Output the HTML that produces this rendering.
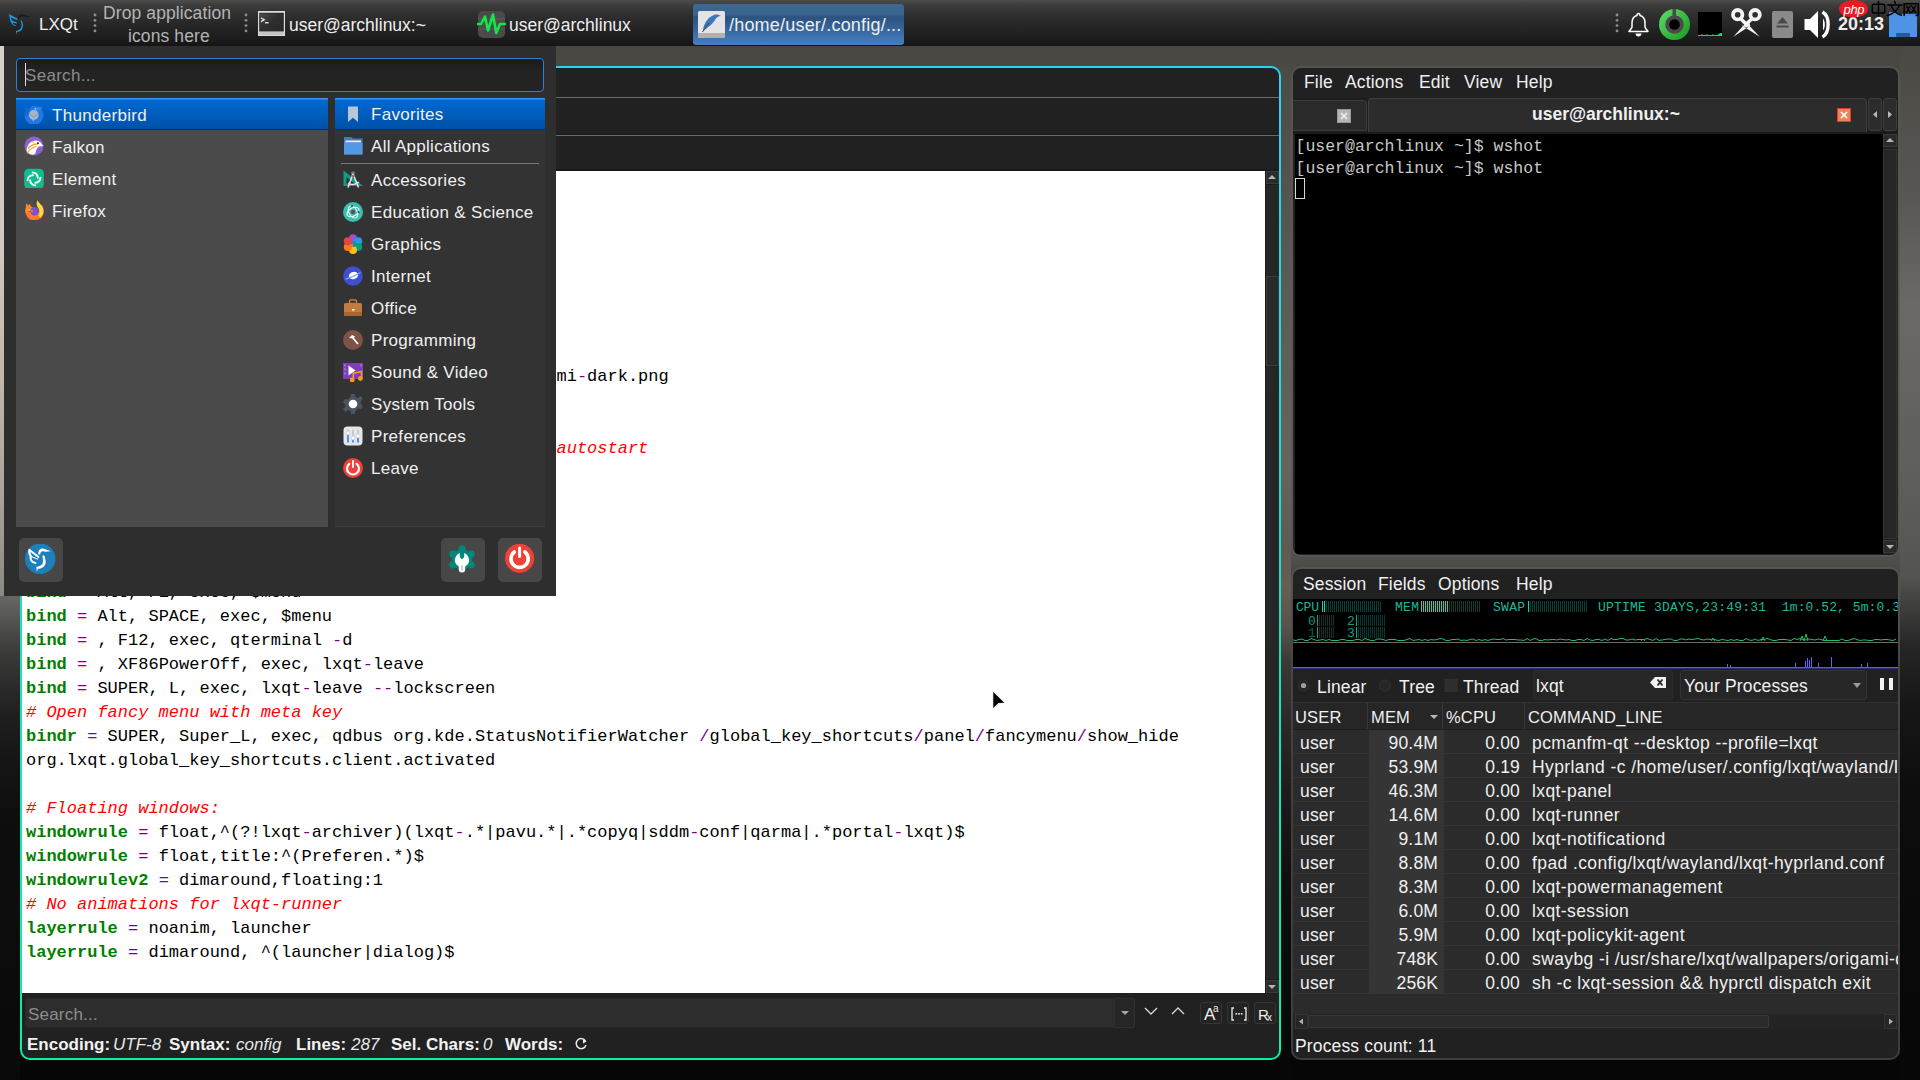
<!DOCTYPE html>
<html><head><meta charset="utf-8">
<style>
*{box-sizing:border-box;margin:0;padding:0}
html,body{width:1920px;height:1080px;overflow:hidden;background:#0a0a0a}
body{position:relative;font-family:"Liberation Sans",sans-serif;color:#eee}
.abs{position:absolute}
#wall{position:absolute;left:0;top:0;width:1920px;height:1080px;
 background:
  linear-gradient(180deg,#d6d3cc 0px,#cfcac0 200px,#c4bcae 300px,#a8a39b 450px,#8a8884 550px) 0 46px/4px 550px no-repeat,
  linear-gradient(180deg,#484741 46px,#4e4d48 150px,#62615d 300px,#5c5c59 480px,#4f4e4b 560px,#3a3937 610px,#222221 660px,#131313 730px,#0a0a0a 820px,#060606 1080px);}
#panel{left:0;top:0;width:1920px;height:46px;background:linear-gradient(180deg,#4c4c4b 0px,#3b3b3a 6px,#303030 14px,#262626 26px,#1d1d1d 38px,#141414 46px)}
.ptxt{position:absolute;font-size:17px;color:#eee;white-space:nowrap}
.win{position:absolute;border-radius:10px;overflow:hidden}
.code{position:absolute;left:4px;top:1.5px;font-family:"Liberation Mono",monospace;font-size:17px;line-height:24px;color:#000;white-space:pre}
.k{color:#008000;font-weight:bold}.o{color:#800080}.c{color:#ff0000;font-style:italic}
.c .o{color:#ff0000}
.tbtn{width:22px;height:22px;border:1px solid #353535;border-radius:3px;background:#232323}
.stat{font-size:17px;color:#f2f2f2;white-space:nowrap}
.stat i{font-style:italic;color:#e8e8e8}
.mt{font-size:17px;color:#f0f0f0;white-space:nowrap;letter-spacing:0.3px;margin-top:2px}
.hl{background:linear-gradient(180deg,#3d92f2 0px,#3d92f2 1px,#0068d0 2px,#005ebe 50%,#0050a6 100%);border-bottom:1px solid #00306c}
.mbtn{width:44px;height:44px;background:#474747;border-radius:5px}
.hdl{position:absolute;top:13px;width:4px;height:21px}
.ut{font-size:17.5px;color:#f0f0f0;white-space:nowrap;letter-spacing:0.15px}
.tt{font-family:"Liberation Mono",monospace;font-size:16.5px;line-height:22px;color:#c8c8c8;white-space:pre}
.qr{left:0;width:605px;height:24px;background:#2b2b2b;border-bottom:1px solid #353535}
.qc{top:2px;font-size:17.5px;color:#f0f0f0;white-space:nowrap;line-height:23px;height:23px;letter-spacing:0.15px}
.lcd{font-family:"Liberation Mono",monospace;font-size:12.5px;color:#1cc4a8;white-space:pre;letter-spacing:0.5px;line-height:12px;transform:scaleY(0.95)}
</style></head>
<body>
<div id="wall"></div>
<div class="abs" style="left:0;top:596px;width:20px;height:484px;background:linear-gradient(180deg,#666664 0px,#5a5a58 18px,#464645 40px,#383837 60px,#2b2b2b 90px,#1f1f1f 120px,#161616 160px,#0e0e0e 220px,#090909 484px)"></div>
<div class="abs" style="left:1281px;top:66px;width:10px;height:1014px;background:linear-gradient(180deg,#4b4a45 0px,#5a5955 200px,#66645f 400px,#5e5a54 480px,#675e54 520px,#5a534b 560px,#3a3633 600px,#2a2928 660px,#1a1a1a 740px,#0e0e0e 820px,#070707 1014px)"></div>
<div class="abs" style="left:1900px;top:46px;width:20px;height:1034px;background:linear-gradient(180deg,#4a4944 0px,#585753 150px,#6a6966 260px,#5d5d5a 450px,#545451 530px,#3e3e3c 560px,#262626 600px,#161616 660px,#0c0c0c 760px,#070707 1034px)"></div>
<div id="panel" class="abs">
 <svg class="abs" style="left:7px;top:10px" width="26" height="26" viewBox="0 0 26 26">
  <path d="M2 4 L11 9 L10 10 L4 7.5 C4 9 5 10.5 6 11 L10 12.5 L9.5 13.5 L5.5 12.5 C6 14 7 15 9 15.5 L8.5 16 C5 15.5 3 12 2 4Z" fill="#1b9ae4"/>
  <path d="M14 10 C16 12 16.5 15 15.5 18 C14.5 21 12 22 10 22 L9.5 25 L9 21 C12 20.5 14 19 14.5 16.5 C15 14 14 11.5 13.5 10.5Z" fill="#1b9ae4"/>
  <path d="M11 9 C11 5.5 13 4.5 15 4.5 C17 4.5 18 5 19 5.5 L25 6.5 L19 6.8 C17.5 6.2 15.5 6 14 6.5 C12.5 7 12 8 11.8 9.5Z" fill="#1a1a1a"/>
 </svg>
 <div class="ptxt" style="left:39px;top:15px;font-size:17px">LXQt</div>
 <div class="hdl" style="left:93px"><svg width="4" height="21"><circle cx="2" cy="2" r="1.4" fill="#8d8d8d"/><circle cx="2" cy="7.3" r="1.4" fill="#8d8d8d"/><circle cx="2" cy="12.6" r="1.4" fill="#8d8d8d"/><circle cx="2" cy="17.9" r="1.4" fill="#8d8d8d"/></svg></div>
 <div class="ptxt" style="left:103px;top:3px;color:#b4b4b4;font-size:17.5px;letter-spacing:0.1px">Drop application</div>
 <div class="ptxt" style="left:128px;top:26px;color:#b4b4b4;font-size:17.5px;letter-spacing:0.1px">icons here</div>
 <div class="hdl" style="left:244px"><svg width="4" height="21"><circle cx="2" cy="2" r="1.4" fill="#8d8d8d"/><circle cx="2" cy="7.3" r="1.4" fill="#8d8d8d"/><circle cx="2" cy="12.6" r="1.4" fill="#8d8d8d"/><circle cx="2" cy="17.9" r="1.4" fill="#8d8d8d"/></svg></div>
 <svg class="abs" style="left:257px;top:10px" width="29" height="27" viewBox="0 0 29 27">
  <defs><linearGradient id="tg" x1="0" y1="0" x2="1" y2="1"><stop offset="0" stop-color="#4c4c4c"/><stop offset="0.5" stop-color="#2e2e2e"/><stop offset="1" stop-color="#262626"/></linearGradient></defs>
  <rect x="1" y="1" width="27" height="25" fill="#dcdcdc"/><rect x="2.3" y="2.8" width="24.4" height="18.7" fill="#151515"/><rect x="2.8" y="3.3" width="23.4" height="17.7" fill="url(#tg)"/><rect x="2.3" y="21.8" width="24.4" height="3.3" fill="#c4c4c4"/>
  <path d="M4 8 L7.3 9.8 L4 11.6" stroke="#eee" stroke-width="1.2" fill="none"/><rect x="8" y="12" width="3.6" height="1.5" fill="#d8d8d8"/>
 </svg>
 <div class="ptxt" style="left:289px;top:15px;font-size:17.5px">user@archlinux:~</div>
 <svg class="abs" style="left:477px;top:10px" width="29" height="29" viewBox="0 0 29 29">
  <rect x="1" y="1" width="27" height="27" rx="5" fill="#4a4a4a"/><path d="M1 9 H28 M1 14 H28 M1 19 H28" stroke="#5a5a5a" stroke-width="1"/>
  <path d="M1 14 H4 L8 6.5 L11 20.5 L16 4.5 L19.3 23 L23 14 H28" stroke="#12e648" stroke-width="2.6" fill="none" stroke-linejoin="round" stroke-linecap="round"/>
 </svg>
 <div class="ptxt" style="left:509px;top:15px;font-size:17.5px">user@archlinux</div>
 <div class="abs" style="left:693px;top:4px;width:211px;height:41px;border-radius:3px;background:linear-gradient(180deg,#3d6792 0px,#3a628d 11px,#2c5380 13px,#305b8c 19px,#3a6ca6 29px,#4480c2 41px)"></div>
 <svg class="abs" style="left:698px;top:11px" width="28" height="28" viewBox="0 0 28 28">
  <rect x="0" y="0" width="27" height="27" rx="1.5" fill="#e4e4e4"/><rect x="0" y="22" width="27" height="5" fill="#b0b0b0"/>
  <path d="M5 19 C6 12 10 6 16 4 C19 3 21 4 23 5 C20 5 18 7 17 9 C15 12 12 15 9 17 L5 20Z" fill="#3d78bd"/><path d="M4.5 21 L11 12" stroke="#444" stroke-width="1"/>
 </svg>
 <div class="ptxt" style="left:729px;top:15px;font-size:18px;letter-spacing:0.2px">/home/user/.config/...</div>
 <div class="hdl" style="left:1615px"><svg width="4" height="21"><circle cx="2" cy="2" r="1.4" fill="#8d8d8d"/><circle cx="2" cy="7.3" r="1.4" fill="#8d8d8d"/><circle cx="2" cy="12.6" r="1.4" fill="#8d8d8d"/><circle cx="2" cy="17.9" r="1.4" fill="#8d8d8d"/></svg></div>
 <svg class="abs" style="left:1627px;top:12px" width="23" height="25" viewBox="0 0 23 25">
  <path d="M11.5 1.5 C13 1.5 13 3 13 3.5 C17 4.5 18 8 18 11 L18 15 C18.5 17 20 18 21 19.5 L2 19.5 C3 18 4.5 17 5 15 L5 11 C5 8 6 4.5 10 3.5 C10 3 10 1.5 11.5 1.5Z" stroke="#fff" stroke-width="1.5" fill="none" stroke-linejoin="round"/>
  <path d="M8.5 21.5 H14.5 C14.5 23.5 13 24.5 11.5 24.5 C10 24.5 8.5 23.5 8.5 21.5Z" fill="#fff"/>
 </svg>
 <svg class="abs" style="left:1658px;top:8px" width="33" height="33" viewBox="0 0 33 33">
  <defs><linearGradient id="gr" x1="0" y1="0" x2="1" y2="1"><stop offset="0" stop-color="#5fe06a"/><stop offset="1" stop-color="#17951f"/></linearGradient></defs>
  <circle cx="16.5" cy="16.5" r="15.5" fill="url(#gr)"/><circle cx="16.5" cy="16.5" r="9.3" fill="#4a4a4a"/><rect x="14.5" y="1" width="3.5" height="8" fill="#4a4a4a"/><circle cx="16.5" cy="16.5" r="5.3" fill="#000"/>
 </svg>
 <div class="abs" style="left:1698px;top:12px;width:24px;height:24px;background:#000"></div>
 <svg class="abs" style="left:1698px;top:32px" width="24" height="4"><path d="M0 3 H3 L4 2 L5 3 H8 L9 2 L10 3 H14 L15 2 L16 3 H19 L21 2 L22 1 L24 1 V4 H0Z" fill="#10d868"/></svg>
 <svg class="abs" style="left:1730px;top:7px" width="32" height="31" viewBox="0 0 32 31">
  <circle cx="7.7" cy="7.7" r="4.7" stroke="#f4f4f4" stroke-width="3.8" fill="none"/><circle cx="25.1" cy="7.7" r="4.7" stroke="#f4f4f4" stroke-width="3.8" fill="none"/>
  <path d="M10.5 11.5 L16.2 17 M22.3 11.5 L16.2 17" stroke="#f4f4f4" stroke-width="3.4"/>
  <path d="M17.5 14 L20.5 18.5 L3.4 29.8Z M14.9 14 L11.9 18.5 L29.7 29.8Z M13 15.5 L19.4 15.5 L20 19 L16.2 20.5 L12.4 19Z" fill="#f4f4f4"/>
 </svg>
 <div class="abs" style="left:1772px;top:11px;width:21px;height:27px;background:#8a8a8a;border-radius:2px"></div>
 <svg class="abs" style="left:1772px;top:11px" width="21" height="27"><path d="M5 12.5 L10.5 6 L16 12.5Z" fill="#4a4a4a"/><rect x="4.5" y="14.5" width="12" height="2" fill="#4a4a4a"/></svg>
 <svg class="abs" style="left:1804px;top:10px" width="31" height="29" viewBox="0 0 31 29">
  <path d="M0.5 9 H6 L14 1 V28 L6 20 H0.5Z" fill="#fff"/>
  <path d="M19 8.5 C21.5 11.5 21.5 17.5 19 20.5 Z" fill="#fff"/>
  <path d="M18.5 2 C26 6 26 23 18.5 27" stroke="#fff" stroke-width="3.4" fill="none"/>
 </svg>
 <div class="ptxt" style="left:1838px;top:14px;font-size:18px;font-weight:bold">20:13</div>
 <svg class="abs" style="left:1888px;top:11px" width="30" height="27" viewBox="0 0 30 27">
  <path d="M1 1 H9 L11 3 H29 V26 H1Z" fill="#4a90e2"/><rect x="1" y="5" width="28" height="21" fill="#4f94e4"/><rect x="8" y="22" width="14" height="4" rx="1" fill="#2a5a90"/>
 </svg>
 <svg class="abs" style="left:1836px;top:0px" width="84" height="20" viewBox="0 0 84 20">
  <path d="M17.5 0 C26 0.5 32 4 32 9 C32 14 26 17.3 17.5 17.3 C9 17.3 3 14 3 9 C3 4 9 0.5 17.5 0Z" fill="#ea1a22"/>
  <text x="7.5" y="13.5" font-family="Liberation Sans" font-style="italic" font-size="13" fill="#fff" textLength="21">php</text>
  <g stroke="#000" stroke-width="1.5" fill="none" stroke-linecap="round">
   <rect x="36.3" y="4.3" width="12.5" height="8.7" rx="1.8"/><path d="M42.5 1.5 V16"/>
   <path d="M58.5 1.3 L59.3 3.3 M51.8 5 H66 M55 5.5 C57 10 60 14 65.5 15.2 M63.5 5.5 C61 10.5 57 14 51.5 15.5"/>
   <path d="M68.2 15.5 V3.8 H82.3 V14 C82.3 15.5 81.3 15.6 80.2 15.2 M70.5 6 L74 12.5 M74 6 L70.5 12.5 M75.8 6 L79.5 12.5 M79.5 6 L75.8 12.5"/>
  </g>
 </svg>
</div>

<!-- editor window -->
<div class="win" id="ed" style="left:20px;top:66px;width:1261px;height:994px;background:linear-gradient(180deg,#2ad2f4 0%,#22dcd8 28%,#1ae2c0 55%,#12eaa8 85%,#10eca0 100%);padding:2px">
 <div style="position:relative;width:100%;height:100%;background:#212121;border-radius:8px;overflow:hidden">
  <div class="abs" style="left:0;top:29px;width:1257px;height:1px;background:#6a6a6a"></div>
  <div class="abs" style="left:0;top:66px;width:1257px;height:1px;background:#1a1a1a"></div>
  <div class="abs" style="left:0;top:67px;width:1257px;height:1px;background:#6a6a6a"></div>
  <div class="abs" style="left:0;top:101px;width:1257px;height:2px;background:#191919"></div>
  <div class="abs" id="txt" style="left:0;top:103px;width:1243px;height:822px;background:#fff;overflow:hidden">
   <pre class="code">








                                                    mi<span class="o">-</span>dark.png


                                                    <span class="c">autostart</span>





<span class="k">bind</span> <span class="o">=</span> Alt, F1, exec, $menu
<span class="k">bind</span> <span class="o">=</span> Alt, SPACE, exec, $menu
<span class="k">bind</span> <span class="o">=</span> , F12, exec, qterminal <span class="o">-</span>d
<span class="k">bind</span> <span class="o">=</span> , XF86PowerOff, exec, lxqt<span class="o">-</span>leave
<span class="k">bind</span> <span class="o">=</span> SUPER, L, exec, lxqt<span class="o">-</span>leave <span class="o">-</span><span class="o">-</span>lockscreen
<span class="c"># Open fancy menu with meta key</span>
<span class="k">bindr</span> <span class="o">=</span> SUPER, Super_L, exec, qdbus org.kde.StatusNotifierWatcher <span class="o">/</span>global_key_shortcuts<span class="o">/</span>panel<span class="o">/</span>fancymenu<span class="o">/</span>show_hide
org.lxqt.global_key_shortcuts.client.activated

<span class="c"># Floating windows:</span>
<span class="k">windowrule</span> <span class="o">=</span> float,^(?!lxqt<span class="o">-</span>archiver)(lxqt<span class="o">-</span>.*|pavu.*|.*copyq|sddm<span class="o">-</span>conf|qarma|.*portal<span class="o">-</span>lxqt)$
<span class="k">windowrule</span> <span class="o">=</span> float,title:^(Preferen.*)$
<span class="k">windowrulev2</span> <span class="o">=</span> dimaround,floating:1
<span class="c"># No animations for lxqt<span class="o">-</span>runner</span>
<span class="k">layerrule</span> <span class="o">=</span> noanim, launcher
<span class="k">layerrule</span> <span class="o">=</span> dimaround, ^(launcher|dialog)$

<span class="c"># Misc l l</span>
   </pre>
  </div>
  <div class="abs" style="left:1243px;top:102px;width:14px;height:824px;background:#1b1b1b">
    <div class="abs" style="left:1px;top:1px;width:13px;height:13px;background:#2b2b2b;border:1px solid #3a3a3a"></div>
    <div class="abs" style="left:3px;top:5px;width:0;height:0;border-left:4px solid transparent;border-right:4px solid transparent;border-bottom:4px solid #b5b5b5"></div>
    <div class="abs" style="left:1px;top:15px;width:13px;height:794px;background:#262626"></div>
    <div class="abs" style="left:1px;top:106px;width:13px;height:90px;background:#2a2a2a;border:1px solid #3c3c3c"></div>
    <div class="abs" style="left:1px;top:810px;width:13px;height:13px;background:#2b2b2b;border:1px solid #3a3a3a"></div>
    <div class="abs" style="left:3px;top:815px;width:0;height:0;border-left:4px solid transparent;border-right:4px solid transparent;border-top:4px solid #b5b5b5"></div>
  </div>
  <!-- search bar -->
  <div class="abs" style="left:3px;top:930px;width:1110px;height:30px;background:#2d2d2d;border-radius:3px 0 0 3px;border:1px solid #282828"></div>
  <div class="abs" style="left:6px;top:937px;font-size:17px;color:#8d8d8d;letter-spacing:0.2px">Search...</div>
  <div class="abs" style="left:1093px;top:930px;width:20px;height:30px;background:#262626;border:1px solid #303030;border-left:none;border-radius:0 3px 3px 0"></div>
  <div class="abs" style="left:1099px;top:943px;width:0;height:0;border-left:4px solid transparent;border-right:4px solid transparent;border-top:4px solid #a8a8a8"></div>
  <svg class="abs" style="left:1120px;top:934px" width="70" height="20"><path d="M3 6 L9 12 L15 6" stroke="#d8d8d8" stroke-width="1.3" fill="none"/><path d="M30 12 L36 6 L42 12" stroke="#d8d8d8" stroke-width="1.3" fill="none"/></svg>
  <div class="abs tbtn" style="left:1178px;top:934px"><svg width="22" height="22"><text x="3" y="17" font-size="17" fill="#eee" font-family="Liberation Sans">A</text><text x="12" y="9" font-size="10" fill="#eee" font-family="Liberation Sans">a</text></svg></div>
  <div class="abs tbtn" style="left:1205px;top:934px"><svg width="22" height="22"><path d="M6 5 H4 V17 H6 M16 5 H18 V17 H16" stroke="#eee" stroke-width="1.3" fill="none"/><rect x="7.5" y="10" width="1.6" height="1.6" fill="#eee"/><rect x="10.2" y="10" width="1.6" height="1.6" fill="#eee"/><rect x="12.9" y="10" width="1.6" height="1.6" fill="#eee"/></svg></div>
  <div class="abs tbtn" style="left:1232px;top:934px"><svg width="22" height="22"><text x="3" y="17" font-size="15" fill="#eee" font-family="Liberation Sans">R</text><text x="12" y="18" font-size="10" fill="#eee" font-family="Liberation Sans">x</text></svg></div>
  <!-- status -->
  <div class="abs stat" style="left:5px;top:967px;width:91px"><b>Encoding:</b></div><div class="abs stat" style="left:91px;top:967px;width:52px"><i>UTF-8</i></div><div class="abs stat" style="left:147px;top:967px;width:72px"><b>Syntax:</b></div><div class="abs stat" style="left:214px;top:967px;width:56px"><i>config</i></div><div class="abs stat" style="left:274px;top:967px;width:59px"><b>Lines:</b></div><div class="abs stat" style="left:329px;top:967px;width:36px"><i>287</i></div><div class="abs stat" style="left:369px;top:967px;width:99px"><b>Sel. Chars:</b></div><div class="abs stat" style="left:461px;top:967px;width:18px"><i>0</i></div><div class="abs stat" style="left:483px;top:967px;width:67px"><b>Words:</b></div><svg class="abs" style="left:551px;top:968px" width="16" height="16"><path d="M12.5 5 A5 5 0 1 0 13 9" stroke="#eee" stroke-width="1.4" fill="none"/><path d="M10 2.5 L13.5 5.5 L10 7.5Z" fill="#eee"/></svg>
 </div>
</div>

<!-- terminal -->
<div class="win" id="term" style="left:1291px;top:66px;width:609px;height:491px;background:rgba(89,89,89,0.67);padding:2px">
 <div style="position:relative;width:100%;height:100%;background:#212121;border-radius:8px;overflow:hidden">
  <div class="abs ut" style="left:11px;top:4px">File</div>
  <div class="abs ut" style="left:52px;top:4px">Actions</div>
  <div class="abs ut" style="left:126px;top:4px">Edit</div>
  <div class="abs ut" style="left:171px;top:4px">View</div>
  <div class="abs ut" style="left:223px;top:4px">Help</div>
  <div class="abs" style="left:0;top:30px;width:605px;height:34px;background:#1d1d1d"></div>
  <div class="abs" style="left:-6px;top:32px;width:80px;height:31px;background:#2a2a2a;border:1px solid #3c3c3c;border-radius:0 4px 0 0"></div>
  <div class="abs" style="left:44px;top:41px;width:14px;height:14px;background:#b4b4b4;border:1px solid #999"></div>
  <svg class="abs" style="left:44px;top:41px" width="14" height="14"><path d="M4 4 L10 10 M10 4 L4 10" stroke="#eee" stroke-width="1.6"/></svg>
  <div class="abs" style="left:75px;top:30px;width:499px;height:34px;background:#2c2c2c;border:1px solid #3e3e3e;border-bottom:none;border-radius:4px 4px 0 0"></div>
  <div class="abs ut" style="left:239px;top:36px;font-weight:bold;font-size:17.5px;letter-spacing:0px">user@archlinux:~</div>
  <div class="abs" style="left:544px;top:40px;width:14px;height:14px;background:#e8865a;border:1px solid #e03a2a"></div>
  <svg class="abs" style="left:544px;top:40px" width="14" height="14"><path d="M4 4 L10 10 M10 4 L4 10" stroke="#fff" stroke-width="1.6"/></svg>
  <div class="abs" style="left:575px;top:30px;width:14px;height:33px;background:#2c2c2c;border:1px solid #3e3e3e;border-radius:3px"></div>
  <div class="abs" style="left:590px;top:30px;width:14px;height:33px;background:#2c2c2c;border:1px solid #3e3e3e;border-radius:3px"></div>
  <svg class="abs" style="left:575px;top:30px" width="30" height="33"><path d="M5 16.5 L9 13 V20Z" fill="#b8b8b8"/><path d="M24 16.5 L20 13 V20Z" fill="#b8b8b8"/></svg>
  <div class="abs" style="left:0;top:64px;width:605px;height:2px;background:#1a1a1a"></div>
  <div class="abs" style="left:2px;top:66px;width:588px;height:420px;background:#000"></div>
  <pre class="abs tt" style="left:2.5px;top:68px">[user@archlinux ~]$ wshot
[user@archlinux ~]$ wshot</pre>
  <div class="abs" style="left:2px;top:110px;width:10px;height:21px;border:1.5px solid #d8d8d8"></div>
  <div class="abs" style="left:590px;top:66px;width:14px;height:420px;background:#1e1e1e"></div>
  <div class="abs" style="left:590px;top:66px;width:14px;height:13px;background:#2a2a2a;border:1px solid #3a3a3a"></div>
  <div class="abs" style="left:593px;top:70px;width:0;height:0;border-left:4px solid transparent;border-right:4px solid transparent;border-bottom:4px solid #b5b5b5"></div>
  <div class="abs" style="left:590px;top:81px;width:14px;height:390px;background:#262626;border:1px solid #333"></div>
  <div class="abs" style="left:590px;top:472px;width:14px;height:13px;background:#2a2a2a;border:1px solid #3a3a3a"></div>
  <div class="abs" style="left:593px;top:477px;width:0;height:0;border-left:4px solid transparent;border-right:4px solid transparent;border-top:4px solid #b5b5b5"></div>
 </div>
</div>

<!-- qps -->
<div class="win" id="qps" style="left:1291px;top:567px;width:609px;height:493px;background:rgba(89,89,89,0.67);padding:2px">
 <div style="position:relative;width:100%;height:100%;background:#212121;border-radius:8px;overflow:hidden">
  <div class="abs ut" style="left:10px;top:5px">Session</div>
  <div class="abs ut" style="left:85px;top:5px">Fields</div>
  <div class="abs ut" style="left:145px;top:5px">Options</div>
  <div class="abs ut" style="left:223px;top:5px">Help</div>
  <div class="abs" style="left:0;top:30px;width:605px;height:70px;background:#000"></div>
  <svg class="abs" style="left:0;top:30px" width="605" height="70"><rect x="29" y="2" width="1" height="11" fill="#1fd4b4"/><rect x="31" y="2" width="1" height="11" fill="#1fd4b4"/><rect x="33" y="2" width="1" height="11" fill="#0b3f38"/><rect x="35" y="2" width="1" height="11" fill="#0b3f38"/><rect x="37" y="2" width="1" height="11" fill="#0b3f38"/><rect x="39" y="2" width="1" height="11" fill="#0b3f38"/><rect x="41" y="2" width="1" height="11" fill="#0b3f38"/><rect x="43" y="2" width="1" height="11" fill="#0b3f38"/><rect x="45" y="2" width="1" height="11" fill="#0b3f38"/><rect x="47" y="2" width="1" height="11" fill="#0b3f38"/><rect x="49" y="2" width="1" height="11" fill="#0b3f38"/><rect x="51" y="2" width="1" height="11" fill="#0b3f38"/><rect x="53" y="2" width="1" height="11" fill="#0b3f38"/><rect x="55" y="2" width="1" height="11" fill="#0b3f38"/><rect x="57" y="2" width="1" height="11" fill="#0b3f38"/><rect x="59" y="2" width="1" height="11" fill="#0b3f38"/><rect x="61" y="2" width="1" height="11" fill="#0b3f38"/><rect x="63" y="2" width="1" height="11" fill="#0b3f38"/><rect x="65" y="2" width="1" height="11" fill="#0b3f38"/><rect x="67" y="2" width="1" height="11" fill="#0b3f38"/><rect x="69" y="2" width="1" height="11" fill="#0b3f38"/><rect x="71" y="2" width="1" height="11" fill="#0b3f38"/><rect x="73" y="2" width="1" height="11" fill="#0b3f38"/><rect x="75" y="2" width="1" height="11" fill="#0b3f38"/><rect x="77" y="2" width="1" height="11" fill="#0b3f38"/><rect x="79" y="2" width="1" height="11" fill="#0b3f38"/><rect x="81" y="2" width="1" height="11" fill="#0b3f38"/><rect x="83" y="2" width="1" height="11" fill="#0b3f38"/><rect x="85" y="2" width="1" height="11" fill="#0b3f38"/><rect x="87" y="2" width="1" height="11" fill="#0b3f38"/><rect x="128" y="2" width="1" height="11" fill="#1fd4b4"/><rect x="130" y="2" width="1" height="11" fill="#1fd4b4"/><rect x="132" y="2" width="1" height="11" fill="#1fd4b4"/><rect x="134" y="2" width="1" height="11" fill="#1fd4b4"/><rect x="136" y="2" width="1" height="11" fill="#1fd4b4"/><rect x="138" y="2" width="1" height="11" fill="#1fd4b4"/><rect x="140" y="2" width="1" height="11" fill="#1fd4b4"/><rect x="142" y="2" width="1" height="11" fill="#1fd4b4"/><rect x="144" y="2" width="1" height="11" fill="#1fd4b4"/><rect x="146" y="2" width="1" height="11" fill="#1fd4b4"/><rect x="148" y="2" width="1" height="11" fill="#1fd4b4"/><rect x="150" y="2" width="1" height="11" fill="#1fd4b4"/><rect x="152" y="2" width="1" height="11" fill="#1fd4b4"/><rect x="154" y="2" width="1" height="11" fill="#1fd4b4"/><rect x="156" y="2" width="1" height="11" fill="#0b3f38"/><rect x="158" y="2" width="1" height="11" fill="#0b3f38"/><rect x="160" y="2" width="1" height="11" fill="#0b3f38"/><rect x="162" y="2" width="1" height="11" fill="#0b3f38"/><rect x="164" y="2" width="1" height="11" fill="#0b3f38"/><rect x="166" y="2" width="1" height="11" fill="#0b3f38"/><rect x="168" y="2" width="1" height="11" fill="#0b3f38"/><rect x="170" y="2" width="1" height="11" fill="#0b3f38"/><rect x="172" y="2" width="1" height="11" fill="#0b3f38"/><rect x="174" y="2" width="1" height="11" fill="#0b3f38"/><rect x="176" y="2" width="1" height="11" fill="#0b3f38"/><rect x="178" y="2" width="1" height="11" fill="#0b3f38"/><rect x="180" y="2" width="1" height="11" fill="#0b3f38"/><rect x="182" y="2" width="1" height="11" fill="#0b3f38"/><rect x="184" y="2" width="1" height="11" fill="#0b3f38"/><rect x="186" y="2" width="1" height="11" fill="#0b3f38"/><rect x="235" y="2" width="1" height="11" fill="#1fd4b4"/><rect x="237" y="2" width="1" height="11" fill="#0b3f38"/><rect x="239" y="2" width="1" height="11" fill="#0b3f38"/><rect x="241" y="2" width="1" height="11" fill="#0b3f38"/><rect x="243" y="2" width="1" height="11" fill="#0b3f38"/><rect x="245" y="2" width="1" height="11" fill="#0b3f38"/><rect x="247" y="2" width="1" height="11" fill="#0b3f38"/><rect x="249" y="2" width="1" height="11" fill="#0b3f38"/><rect x="251" y="2" width="1" height="11" fill="#0b3f38"/><rect x="253" y="2" width="1" height="11" fill="#0b3f38"/><rect x="255" y="2" width="1" height="11" fill="#0b3f38"/><rect x="257" y="2" width="1" height="11" fill="#0b3f38"/><rect x="259" y="2" width="1" height="11" fill="#0b3f38"/><rect x="261" y="2" width="1" height="11" fill="#0b3f38"/><rect x="263" y="2" width="1" height="11" fill="#0b3f38"/><rect x="265" y="2" width="1" height="11" fill="#0b3f38"/><rect x="267" y="2" width="1" height="11" fill="#0b3f38"/><rect x="269" y="2" width="1" height="11" fill="#0b3f38"/><rect x="271" y="2" width="1" height="11" fill="#0b3f38"/><rect x="273" y="2" width="1" height="11" fill="#0b3f38"/><rect x="275" y="2" width="1" height="11" fill="#0b3f38"/><rect x="277" y="2" width="1" height="11" fill="#0b3f38"/><rect x="279" y="2" width="1" height="11" fill="#0b3f38"/><rect x="281" y="2" width="1" height="11" fill="#0b3f38"/><rect x="283" y="2" width="1" height="11" fill="#0b3f38"/><rect x="285" y="2" width="1" height="11" fill="#0b3f38"/><rect x="287" y="2" width="1" height="11" fill="#0b3f38"/><rect x="289" y="2" width="1" height="11" fill="#0b3f38"/><rect x="291" y="2" width="1" height="11" fill="#0b3f38"/><rect x="293" y="2" width="1" height="11" fill="#0b3f38"/><rect x="24" y="16" width="1" height="11" fill="#1a9e88"/><rect x="26" y="16" width="1" height="11" fill="#0a3530"/><rect x="28" y="16" width="1" height="11" fill="#0a3530"/><rect x="30" y="16" width="1" height="11" fill="#0a3530"/><rect x="32" y="16" width="1" height="11" fill="#0a3530"/><rect x="34" y="16" width="1" height="11" fill="#0a3530"/><rect x="36" y="16" width="1" height="11" fill="#0a3530"/><rect x="38" y="16" width="1" height="11" fill="#0a3530"/><rect x="40" y="16" width="1" height="11" fill="#0a3530"/><rect x="63" y="16" width="1" height="11" fill="#1a9e88"/><rect x="65" y="16" width="1" height="11" fill="#0a3530"/><rect x="67" y="16" width="1" height="11" fill="#0a3530"/><rect x="69" y="16" width="1" height="11" fill="#0a3530"/><rect x="71" y="16" width="1" height="11" fill="#0a3530"/><rect x="73" y="16" width="1" height="11" fill="#0a3530"/><rect x="75" y="16" width="1" height="11" fill="#0a3530"/><rect x="77" y="16" width="1" height="11" fill="#0a3530"/><rect x="79" y="16" width="1" height="11" fill="#0a3530"/><rect x="81" y="16" width="1" height="11" fill="#0a3530"/><rect x="83" y="16" width="1" height="11" fill="#0a3530"/><rect x="85" y="16" width="1" height="11" fill="#0a3530"/><rect x="87" y="16" width="1" height="11" fill="#0a3530"/><rect x="89" y="16" width="1" height="11" fill="#0a3530"/><rect x="91" y="16" width="1" height="11" fill="#0a3530"/><rect x="24" y="28" width="1" height="11" fill="#1a9e88"/><rect x="26" y="28" width="1" height="11" fill="#0a3530"/><rect x="28" y="28" width="1" height="11" fill="#0a3530"/><rect x="30" y="28" width="1" height="11" fill="#0a3530"/><rect x="32" y="28" width="1" height="11" fill="#0a3530"/><rect x="34" y="28" width="1" height="11" fill="#0a3530"/><rect x="36" y="28" width="1" height="11" fill="#0a3530"/><rect x="38" y="28" width="1" height="11" fill="#0a3530"/><rect x="40" y="28" width="1" height="11" fill="#0a3530"/><rect x="63" y="28" width="1" height="11" fill="#1a9e88"/><rect x="65" y="28" width="1" height="11" fill="#0a3530"/><rect x="67" y="28" width="1" height="11" fill="#0a3530"/><rect x="69" y="28" width="1" height="11" fill="#0a3530"/><rect x="71" y="28" width="1" height="11" fill="#0a3530"/><rect x="73" y="28" width="1" height="11" fill="#0a3530"/><rect x="75" y="28" width="1" height="11" fill="#0a3530"/><rect x="77" y="28" width="1" height="11" fill="#0a3530"/><rect x="79" y="28" width="1" height="11" fill="#0a3530"/><rect x="81" y="28" width="1" height="11" fill="#0a3530"/><rect x="83" y="28" width="1" height="11" fill="#0a3530"/><rect x="85" y="28" width="1" height="11" fill="#0a3530"/><rect x="87" y="28" width="1" height="11" fill="#0a3530"/><rect x="89" y="28" width="1" height="11" fill="#0a3530"/><rect x="91" y="28" width="1" height="11" fill="#0a3530"/><path d="M0 41.0 L3 41.5 L6 40.5 L9 40.0 L12 41.5 L15 41.5 L18 39.5 L21 40.5 L24 41.5 L27 41.0 L30 40.5 L33 41.5 L36 40.5 L39 41.5 L42 41.5 L45 41.5 L48 40.5 L51 40.5 L54 41.5 L57 41.5 L60 41.5 L63 40.5 L66 40.5 L69 41.5 L72 39.5 L75 40.5 L78 41.5 L81 41.5 L84 40.0 L87 40.0 L90 40.5 L93 41.5 L96 40.5 L99 40.5 L102 40.5 L105 41.5 L108 41.5 L111 41.5 L114 40.5 L117 39.5 L120 41.5 L123 41.0 L126 40.5 L129 41.5 L132 40.5 L135 41.5 L138 40.5 L141 41.0 L144 40.5 L147 39.5 L150 40.0 L153 41.5 L156 41.5 L159 40.5 L162 40.5 L165 40.0 L168 41.5 L171 41.0 L174 41.5 L177 40.5 L180 40.0 L183 41.5 L186 40.5 L189 41.5 L192 40.5 L195 41.5 L198 40.5 L201 40.0 L204 40.5 L207 40.5 L210 39.5 L213 41.0 L216 40.5 L219 40.5 L222 40.5 L225 41.0 L228 41.0 L231 41.5 L234 39.5 L237 41.5 L240 40.0 L243 39.5 L246 41.5 L249 41.5 L252 40.5 L255 41.0 L258 40.5 L261 40.5 L264 41.0 L267 40.0 L270 40.5 L273 41.0 L276 40.5 L279 41.5 L282 41.5 L285 40.5 L288 40.5 L291 41.5 L294 39.5 L297 41.0 L300 41.5 L303 40.5 L306 40.5 L309 41.5 L312 40.0 L315 41.5 L318 39.5 L321 40.5 L324 40.5 L327 39.5 L330 39.5 L333 41.0 L336 41.0 L339 40.0 L342 41.0 L345 40.5 L348 40.5 L351 40.5 L354 39.5 L357 40.5 L360 41.5 L363 39.5 L366 41.5 L369 41.0 L372 40.5 L375 40.0 L378 40.0 L381 41.5 L384 41.5 L387 40.0 L390 40.0 L393 41.0 L396 40.0 L399 40.5 L402 40.0 L405 39.5 L408 40.5 L411 41.0 L414 40.0 L417 40.5 L420 40.0 L423 41.0 L426 41.5 L429 40.5 L432 41.0 L435 41.5 L438 40.5 L441 41.5 L444 40.5 L447 41.5 L450 41.5 L453 39.5 L456 41.0 L459 41.5 L462 40.0 L465 41.5 L468 40.5 L471 40.5 L474 39.5 L477 40.5 L480 41.5 L483 41.5 L486 40.5 L489 40.5 L492 40.5 L495 41.0 L498 41.5 L501 39.5 L504 40.5 L507 39.5 L510 40.5 L513 41.0 L516 40.0 L519 40.5 L522 41.0 L525 40.0 L528 40.5 L531 41.5 L534 41.5 L537 41.5 L540 41.5 L543 41.5 L546 41.5 L549 40.0 L552 41.5 L555 41.5 L558 40.5 L561 39.5 L564 40.5 L567 41.5 L570 41.0 L573 41.0 L576 41.5 L579 41.5 L582 40.5 L585 40.5 L588 41.0 L591 40.5 L594 40.5 L597 41.0 L600 41.5 L603 40.0" stroke="#22c060" stroke-width="1" fill="none"/><path d="M468 42 L470 38 L472 42" stroke="#22c060" stroke-width="1" fill="none"/><path d="M507 42 L509 37 L511 42" stroke="#22c060" stroke-width="1" fill="none"/><path d="M511 42 L513 35 L515 42" stroke="#22c060" stroke-width="1" fill="none"/><path d="M530 42 L532 37 L534 42" stroke="#22c060" stroke-width="1" fill="none"/><path d="M418 42 L420 39 L422 42" stroke="#22c060" stroke-width="1" fill="none"/><path d="M348 42 L350 40 L352 42" stroke="#22c060" stroke-width="1" fill="none"/><rect x="0" y="43" width="605" height="1" fill="#6a6a6a"/><rect x="0" y="68" width="605" height="1.5" fill="#5a5af0"/><rect x="434" y="65" width="1" height="3" fill="#6060ff"/><rect x="437" y="66" width="1" height="2" fill="#6060ff"/><rect x="502" y="64" width="1" height="4" fill="#6060ff"/><rect x="512" y="62" width="1" height="6" fill="#6060ff"/><rect x="514" y="59" width="1" height="9" fill="#6060ff"/><rect x="516" y="61" width="1" height="7" fill="#6060ff"/><rect x="518" y="58" width="1" height="10" fill="#6060ff"/><rect x="525" y="64" width="1" height="4" fill="#6060ff"/><rect x="538" y="58" width="1" height="10" fill="#6060ff"/><rect x="568" y="65" width="1" height="3" fill="#6060ff"/><rect x="574" y="64" width="1" height="4" fill="#6060ff"/></svg>
  <svg class="abs" style="left:0;top:30px" width="605" height="44" font-family="Liberation Mono" font-size="13">
<g fill="#1bb89c">
<text x="3" y="12" textLength="23">CPU</text><text x="102" y="12" textLength="24">MEM</text><text x="200" y="12" textLength="32">SWAP</text>
<text x="305" y="12" textLength="168">UPTIME 3DAYS,23:49:31</text><text x="489" y="12" textLength="118">1m:0.52, 5m:0.3</text>
</g>
<g fill="#179a84"><text x="15" y="26">0</text><text x="54" y="26">2</text><text x="54" y="38">3</text></g>
<g fill="#0d5a4e"><text x="15" y="38">1</text></g>
</svg>
  <svg class="abs" style="left:0;top:100px" width="180" height="33">
   <circle cx="10.5" cy="16.5" r="5.5" fill="#262626" stroke="#303030"/><circle cx="10.5" cy="16.5" r="2.6" fill="#a0a0a0"/>
   <circle cx="92" cy="16.5" r="5.5" fill="#262626" stroke="#303030"/>
   <rect x="152" y="10.5" width="12" height="12" fill="#2e2e2e" stroke="#303030"/>
  </svg>
  <div class="abs ut" style="left:24px;top:108px">Linear</div>
  <div class="abs ut" style="left:106px;top:108px">Tree</div>
  <div class="abs ut" style="left:170px;top:108px">Thread</div>
  <div class="abs" style="left:240px;top:101px;width:140px;height:30px;background:#262626;border:1px solid #2c2c2c;border-radius:3px"></div>
  <div class="abs ut" style="left:243px;top:107px">lxqt</div>
  <svg class="abs" style="left:356px;top:107px" width="18" height="16"><path d="M1 6.5 L6 1 H17 V12 H6Z" fill="#f0f0f0"/><path d="M8.5 3.5 L13.5 9.5 M13.5 3.5 L8.5 9.5" stroke="#262626" stroke-width="1.8"/></svg>
  <div class="abs" style="left:387px;top:101px;width:187px;height:30px;background:#262626;border:1px solid #333;border-radius:3px"></div>
  <div class="abs ut" style="left:391px;top:107px">Your Processes</div>
  <div class="abs" style="left:560px;top:114px;width:0;height:0;border-left:4.5px solid transparent;border-right:4.5px solid transparent;border-top:5px solid #9a9a9a"></div>
  <div class="abs" style="left:587px;top:109px;width:4px;height:12px;background:#f4f4f4"></div>
  <div class="abs" style="left:596px;top:109px;width:4px;height:12px;background:#f4f4f4"></div>
  <div class="abs" style="left:0;top:133px;width:605px;height:28px;background:#262626;border-top:1px solid #303030;border-bottom:1px solid #1e1e1e"></div>
  <div class="abs" style="left:74px;top:134px;width:1px;height:26px;background:#3a3a3a"></div>
  <div class="abs" style="left:149px;top:134px;width:1px;height:26px;background:#3a3a3a"></div>
  <div class="abs" style="left:231px;top:134px;width:1px;height:26px;background:#3a3a3a"></div>
  <div class="abs ut" style="left:2px;top:139px;font-size:16.5px">USER</div>
  <div class="abs ut" style="left:78px;top:139px;font-size:16.5px">MEM</div>
  <div class="abs" style="left:137px;top:146px;width:0;height:0;border-left:4px solid transparent;border-right:4px solid transparent;border-top:4px solid #b8b8b8"></div>
  <div class="abs ut" style="left:153px;top:139px;font-size:16.5px">%CPU</div>
  <div class="abs ut" style="left:235px;top:139px;font-size:16.5px">COMMAND_LINE</div>
  <div class="abs" style="left:0;top:161px;width:605px;height:284px;background:#2b2b2b"></div>
<div class="abs qr" style="top:161px"><div class="abs qc" style="left:7px">user</div><div class="abs" style="left:76px;top:0;width:75px;height:23px;background:#353535;"></div><div class="abs qc" style="left:76px;width:69px;text-align:right">90.4M</div><div class="abs qc" style="left:150px;width:77px;text-align:right">0.00</div><div class="abs qc" style="left:239px;letter-spacing:0.4px">pcmanfm-qt --desktop --profile=lxqt</div></div>
<div class="abs qr" style="top:185px"><div class="abs qc" style="left:7px">user</div><div class="abs" style="left:76px;top:0;width:75px;height:23px;background:#353535;"></div><div class="abs qc" style="left:76px;width:69px;text-align:right">53.9M</div><div class="abs qc" style="left:150px;width:77px;text-align:right">0.19</div><div class="abs qc" style="left:239px;letter-spacing:0.4px">Hyprland -c /home/user/.config/lxqt/wayland/lxqt-hyprland.conf</div></div>
<div class="abs qr" style="top:209px"><div class="abs qc" style="left:7px">user</div><div class="abs" style="left:76px;top:0;width:75px;height:23px;background:#353535;"></div><div class="abs qc" style="left:76px;width:69px;text-align:right">46.3M</div><div class="abs qc" style="left:150px;width:77px;text-align:right">0.00</div><div class="abs qc" style="left:239px;letter-spacing:0.4px">lxqt-panel</div></div>
<div class="abs qr" style="top:233px"><div class="abs qc" style="left:7px">user</div><div class="abs" style="left:76px;top:0;width:75px;height:23px;background:#353535;"></div><div class="abs qc" style="left:76px;width:69px;text-align:right">14.6M</div><div class="abs qc" style="left:150px;width:77px;text-align:right">0.00</div><div class="abs qc" style="left:239px;letter-spacing:0.4px">lxqt-runner</div></div>
<div class="abs qr" style="top:257px"><div class="abs qc" style="left:7px">user</div><div class="abs" style="left:76px;top:0;width:75px;height:23px;background:#353535;"></div><div class="abs qc" style="left:76px;width:69px;text-align:right">9.1M</div><div class="abs qc" style="left:150px;width:77px;text-align:right">0.00</div><div class="abs qc" style="left:239px;letter-spacing:0.4px">lxqt-notificationd</div></div>
<div class="abs qr" style="top:281px"><div class="abs qc" style="left:7px">user</div><div class="abs" style="left:76px;top:0;width:75px;height:23px;background:#353535;"></div><div class="abs qc" style="left:76px;width:69px;text-align:right">8.8M</div><div class="abs qc" style="left:150px;width:77px;text-align:right">0.00</div><div class="abs qc" style="left:239px;letter-spacing:0.4px">fpad .config/lxqt/wayland/lxqt-hyprland.conf</div></div>
<div class="abs qr" style="top:305px"><div class="abs qc" style="left:7px">user</div><div class="abs" style="left:76px;top:0;width:75px;height:23px;background:#353535;"></div><div class="abs qc" style="left:76px;width:69px;text-align:right">8.3M</div><div class="abs qc" style="left:150px;width:77px;text-align:right">0.00</div><div class="abs qc" style="left:239px;letter-spacing:0.4px">lxqt-powermanagement</div></div>
<div class="abs qr" style="top:329px"><div class="abs qc" style="left:7px">user</div><div class="abs" style="left:76px;top:0;width:75px;height:23px;background:#353535;"></div><div class="abs qc" style="left:76px;width:69px;text-align:right">6.0M</div><div class="abs qc" style="left:150px;width:77px;text-align:right">0.00</div><div class="abs qc" style="left:239px;letter-spacing:0.4px">lxqt-session</div></div>
<div class="abs qr" style="top:353px"><div class="abs qc" style="left:7px">user</div><div class="abs" style="left:76px;top:0;width:75px;height:23px;background:#353535;"></div><div class="abs qc" style="left:76px;width:69px;text-align:right">5.9M</div><div class="abs qc" style="left:150px;width:77px;text-align:right">0.00</div><div class="abs qc" style="left:239px;letter-spacing:0.4px">lxqt-policykit-agent</div></div>
<div class="abs qr" style="top:377px"><div class="abs qc" style="left:7px">user</div><div class="abs" style="left:76px;top:0;width:75px;height:23px;background:#353535;"></div><div class="abs qc" style="left:76px;width:69px;text-align:right">748K</div><div class="abs qc" style="left:150px;width:77px;text-align:right">0.00</div><div class="abs qc" style="left:239px;letter-spacing:0.4px">swaybg -i /usr/share/lxqt/wallpapers/origami-dark.png</div></div>
<div class="abs qr" style="top:401px"><div class="abs qc" style="left:7px">user</div><div class="abs" style="left:76px;top:0;width:75px;height:23px;background:#353535;"></div><div class="abs qc" style="left:76px;width:69px;text-align:right">256K</div><div class="abs qc" style="left:150px;width:77px;text-align:right">0.00</div><div class="abs qc" style="left:239px;letter-spacing:0.4px">sh -c lxqt-session &amp;&amp; hyprctl dispatch exit</div></div>

  <div class="abs" style="left:0;top:445px;width:605px;height:15px;background:#232323"></div>
  <div class="abs" style="left:2px;top:445px;width:13px;height:15px;background:#262626;border:1px solid #333"></div>
  <svg class="abs" style="left:2px;top:445px" width="13" height="15"><path d="M4 7.5 L8 4.5 V10.5Z" fill="#b0b0b0"/></svg>
  <div class="abs" style="left:15px;top:446px;width:461px;height:13px;background:#2a2a2a;border:1px solid #383838;border-radius:2px"></div>
  <div class="abs" style="left:591px;top:445px;width:13px;height:15px;background:#262626;border:1px solid #333"></div>
  <svg class="abs" style="left:591px;top:445px" width="13" height="15"><path d="M9 7.5 L5 4.5 V10.5Z" fill="#b0b0b0"/></svg>
  <div class="abs ut" style="left:2px;top:467px">Process count: 11</div>
 </div>
</div>

<!-- menu -->
<div class="abs" id="menu" style="left:4px;top:46px;width:552px;height:550px;background:#2e2e2e">
 <div class="abs" style="left:12px;top:12px;width:528px;height:34px;border:1px solid #2e80d6;border-radius:4px;background:linear-gradient(180deg,#1b1b1b,#232323 40%,#232323)"></div>
 <div class="abs" style="left:21px;top:17px;width:1px;height:23px;background:#e0e0e0"></div>
 <div class="abs mt" style="left:21px;top:18px;color:#8c8c8c">Search...</div>
 <!-- left list -->
 <div class="abs" style="left:12px;top:52px;width:312px;height:429px;background:#4b4b4b"></div>
 <div class="abs hl" style="left:12px;top:52px;width:312px;height:32px"></div>
 <div class="abs" style="left:331px;top:52px;width:210px;height:429px;background:#333333;border-bottom:1px solid #3d3d3d"></div>
 <div class="abs hl" style="left:331px;top:52px;width:210px;height:32px"></div>
 <div class="abs" style="left:337px;top:117px;width:198px;height:1px;background:#7a7a7a"></div>
 <svg class="abs" style="left:20px;top:58px" width="20" height="20" viewBox="0 0 20 20"><circle cx="10" cy="11.2" r="9.5" fill="#1f78e6"/><path d="M-1 -1 H9.5 C7.5 2 5.5 4.5 4.5 7.5 L4 11.5 L-1 11.5Z" fill="#0663cb"/><path d="M3.3 3.5 C2 7 2 10 3 13.5" stroke="#1a70dc" stroke-width="1.4" fill="none"/><path d="M6 8 C8 5.5 10 3.5 13.5 3 C15.5 2.8 17 2.5 18.8 3.5 C17.5 4 17 5 17 6Z" fill="#2a85f0"/><circle cx="11.6" cy="4.8" r="0.9" fill="#9cc4f4"/><circle cx="9.8" cy="11" r="4.9" fill="#a6b6c8"/><path d="M5.3 9.8 L9.8 13 L14.2 9.8" stroke="#8796a8" stroke-width="0.9" fill="none"/><path d="M7.5 15 L9.5 17.8 L10 15.5Z" fill="#a6b6c8"/></svg><div class="abs mt" style="left:48px;top:58px">Thunderbird</div>
<svg class="abs" style="left:20px;top:90px" width="20" height="20" viewBox="0 0 20 20"><circle cx="10" cy="10" r="9.5" fill="#8b62d0"/><path d="M2.5 15 C3 9 6.5 4.5 12 4.5 C14.5 4.5 16.5 6 18 8.5 L19.5 10 L15 10.5 C13.5 11.5 12 13.5 11.5 17 C11 19.5 5 19.5 2.5 15Z" fill="#fff"/><path d="M4 12.5 C6.5 9.5 9.5 8 13.5 8" stroke="#f5a530" stroke-width="1.3" fill="none"/><path d="M3 17.5 C5 14 8 11.5 12.5 10.5" stroke="#f5a530" stroke-width="1.2" fill="none"/><path d="M7 5.5 L10 6.5" stroke="#f5a530" stroke-width="1"/><circle cx="14" cy="7.3" r="1" fill="#222"/></svg><div class="abs mt" style="left:48px;top:90px">Falkon</div>
<svg class="abs" style="left:20px;top:122px" width="20" height="20" viewBox="0 0 20 20"><rect x="0.2" y="0.8" width="19.7" height="20" rx="4.5" fill="#0dbd8b"/><g stroke="#fff" stroke-width="1.9" fill="none" stroke-linecap="round"><path d="M8.6 4.5 A5.2 5.2 0 0 1 13.8 9.7"/><path d="M16.5 9.6 A5.2 5.2 0 0 1 11.3 14.8"/><path d="M11.4 17.4 A5.2 5.2 0 0 1 6.2 12.2"/><path d="M3.6 12.2 A5.2 5.2 0 0 1 8.8 7.2"/></g></svg><div class="abs mt" style="left:48px;top:122px">Element</div>
<svg class="abs" style="left:20px;top:154px" width="20" height="20" viewBox="0 0 20 20"><path d="M1.2 10 C1.2 16 5 21 10 21 C15.5 21 20 16.5 20 11 C20 8 19 6 17.5 4.5 L16 12 L4 12Z" fill="#f2446a"/><path d="M1.5 9.5 C1.5 15.5 5.3 20 10 20 C15 20 19.3 16 19.3 11 C19.3 8 18 5.5 16.5 4 L15.5 12 L4 12Z" fill="#ff7f1c"/><path d="M13.2 0.2 C15 3 18.5 5.5 19.3 9.5 C19.8 13 18.8 16 16.5 18 L14.5 15.5 C15.8 13.5 15.8 10 14 7.5 C12.5 6 12.3 3.5 13.2 0.2Z" fill="#ffd93b"/><path d="M1.5 9.5 L2.3 3.2 L4.3 5.6 L6 3.8 L6.8 6.5 C8.5 7 10.5 8 12 9.5 L8.5 11 L5 11.5 L1.5 12.5Z" fill="#ff8a24"/><path d="M3 9.8 C5 9.2 8 9.3 11 10.2 L8 11.2 C6 11.4 4.5 10.8 3 9.8Z" fill="#ffb340"/><circle cx="10.6" cy="11.2" r="4.3" fill="#7b50d6"/><path d="M6.3 10.5 L9.5 10.5 L8 12.5Z" fill="#ff8a24"/></svg><div class="abs mt" style="left:48px;top:154px">Firefox</div>

 <svg class="abs" style="left:339px;top:58px" width="20" height="20" viewBox="0 0 20 20"><path d="M5 2.5 H15 V18 L10 13.8 L5 18Z" fill="#b8c6d6"/></svg><div class="abs mt" style="left:367px;top:57px">Favorites</div>
<svg class="abs" style="left:339px;top:90px" width="20" height="20" viewBox="0 0 20 20"><path d="M1 1 H8 L10 2.5 H19.5 V18.5 H1Z" fill="#3d7bc6"/><rect x="2.5" y="4.5" width="15.5" height="2" fill="#f2ede4"/><rect x="1" y="6.5" width="18.5" height="12" fill="#5597e2"/></svg><div class="abs mt" style="left:367px;top:89px">All Applications</div>
<svg class="abs" style="left:339px;top:124px" width="20" height="20" viewBox="0 0 20 20"><path d="M0.5 0.5 L20 16 L0.5 16Z" fill="#0e9e84"/><path d="M3.5 7 L12 14 L3.5 14Z" fill="#2e2e2e"/><path d="M10 4 L5 17.5 M10 4 L15.5 17.5" stroke="#e6e6e6" stroke-width="1.6" fill="none"/><path d="M5 13 C8 15 12 15 16 12" stroke="#e6e6e6" stroke-width="1.4" fill="none"/><rect x="8.3" y="1.5" width="3.4" height="5.5" rx="0.8" fill="#777"/><circle cx="10" cy="4.3" r="0.9" fill="#ddd"/></svg><div class="abs mt" style="left:367px;top:123px">Accessories</div>
<svg class="abs" style="left:339px;top:156px" width="20" height="20" viewBox="0 0 20 20"><circle cx="10" cy="10" r="10" fill="#38c1b1"/><ellipse cx="10" cy="10" rx="6.5" ry="4" transform="rotate(60 10 10)" stroke="#fff" stroke-width="1" fill="none"/><ellipse cx="10" cy="10" rx="6.5" ry="4" transform="rotate(-30 10 10)" stroke="#fff" stroke-width="1" fill="none"/><circle cx="10" cy="10" r="2.2" fill="#555"/><circle cx="9" cy="4" r="1.1" fill="#444"/><circle cx="15.5" cy="10" r="1.1" fill="#444"/></svg><div class="abs mt" style="left:367px;top:155px">Education &amp; Science</div>
<svg class="abs" style="left:339px;top:188px" width="20" height="20" viewBox="0 0 20 20"><circle cx="10" cy="4.3" r="4" fill="#9c4fd6"/><circle cx="15.2" cy="7.3" r="4" fill="#1e9be9"/><circle cx="15.2" cy="13" r="4" fill="#0a9a7e"/><circle cx="10" cy="16" r="4" fill="#fbbe1a"/><circle cx="4.8" cy="13" r="4" fill="#fb7a14"/><circle cx="4.8" cy="7.3" r="4" fill="#f0413a"/><circle cx="10" cy="10" r="3" fill="#0a9a7e"/><path d="M7 10 A3 3 0 0 1 10 7 L10 10Z" fill="#9c4fd6"/><path d="M10 10 L7 10 A3 3 0 0 0 10 13Z" fill="#fb7a14"/></svg><div class="abs mt" style="left:367px;top:187px">Graphics</div>
<svg class="abs" style="left:339px;top:220px" width="20" height="20" viewBox="0 0 20 20"><circle cx="10" cy="10" r="9.8" fill="#3f4ed0"/><ellipse cx="10.5" cy="9.5" rx="4.8" ry="3.6" transform="rotate(-15 10.5 9.5)" fill="#fff"/><path d="M2.5 13 C5 12.5 10 11 17.5 6.5" stroke="#6aa8ff" stroke-width="1.4" fill="none"/></svg><div class="abs mt" style="left:367px;top:219px">Internet</div>
<svg class="abs" style="left:339px;top:252px" width="20" height="20" viewBox="0 0 20 20"><rect x="1" y="5" width="18" height="13" rx="1.5" fill="#c27a3f"/><rect x="6.5" y="2" width="7" height="3.5" rx="1" stroke="#c27a3f" stroke-width="1.5" fill="none"/><rect x="1" y="14" width="18" height="4" fill="#a9642f"/><rect x="9" y="11" width="2.5" height="1.6" fill="#fff"/></svg><div class="abs mt" style="left:367px;top:251px">Office</div>
<svg class="abs" style="left:339px;top:284px" width="20" height="20" viewBox="0 0 20 20"><circle cx="10" cy="10" r="10" fill="#7d5345"/><path d="M6 8 L9 5 L12 6.5 L10.5 8.5Z" fill="#fff"/><path d="M9.5 7.5 L15 14" stroke="#fff" stroke-width="1.8"/></svg><div class="abs mt" style="left:367px;top:283px">Programming</div>
<svg class="abs" style="left:339px;top:316px" width="20" height="20" viewBox="0 0 20 20"><rect x="0" y="1" width="20" height="16" fill="#7d3fb8"/><g fill="#a57ad8"><rect x="1" y="2.5" width="1.8" height="1.8"/><rect x="1" y="6.5" width="1.8" height="1.8"/><rect x="1" y="10.5" width="1.8" height="1.8"/><rect x="17.2" y="2.5" width="1.8" height="1.8"/></g><path d="M5.5 3.5 L12.5 8.5 L5.5 13.5Z" fill="#fff"/><path d="M10.3 18 V11.5 L18.5 9.5 V16" stroke="#f79a1e" stroke-width="1.6" fill="none"/><circle cx="9.2" cy="18" r="2.4" fill="#f79a1e"/><circle cx="17.4" cy="16.5" r="2.4" fill="#f79a1e"/></svg><div class="abs mt" style="left:367px;top:315px">Sound &amp; Video</div>
<svg class="abs" style="left:339px;top:348px" width="20" height="20" viewBox="0 0 20 20"><g transform="translate(10 10)"><path d="M-2 -10 H2 L2.5 -7 L5 -6 L7.5 -8 L10 -5 L7.5 -2.5 L8 0 L10 2 L8 5 L5 4.5 L2.5 7 L2 10 H-2 L-2.5 7 L-5 6 L-7.5 8 L-10 5 L-7.5 2.5 L-8 0 L-10 -2 L-8 -5 L-5 -4.5 L-2.5 -7Z" fill="#4a5560"/><circle r="4.3" fill="#fff"/></g></svg><div class="abs mt" style="left:367px;top:347px">System Tools</div>
<svg class="abs" style="left:339px;top:380px" width="20" height="20" viewBox="0 0 20 20"><rect x="0.5" y="0.5" width="19" height="19" rx="4" fill="#e4e7ea"/><g stroke-width="1.6"><path d="M5 3.5 V6" stroke="#bfc5cb"/><path d="M5 8 V16.5" stroke="#2d7ce0"/><path d="M10 3.5 V11" stroke="#bfc5cb"/><path d="M10 13 V16.5" stroke="#2d7ce0"/><path d="M15 3.5 V9" stroke="#bfc5cb"/><path d="M15 11 V16.5" stroke="#2d7ce0"/></g><circle cx="5" cy="7" r="2" fill="#fff" stroke="#b8bec4" stroke-width="0.6"/><circle cx="10" cy="12" r="2" fill="#fff" stroke="#b8bec4" stroke-width="0.6"/><circle cx="15" cy="10" r="2" fill="#fff" stroke="#b8bec4" stroke-width="0.6"/></svg><div class="abs mt" style="left:367px;top:379px">Preferences</div>
<svg class="abs" style="left:339px;top:412px" width="20" height="20" viewBox="0 0 20 20"><circle cx="10" cy="10" r="10" fill="#ef4136"/><path d="M6.3 5.8 A6 6 0 1 0 13.7 5.8" stroke="#fff" stroke-width="2.2" fill="none" stroke-linecap="round"/><line x1="10" y1="3" x2="10" y2="9" stroke="#fff" stroke-width="2" stroke-linecap="round"/></svg><div class="abs mt" style="left:367px;top:411px">Leave</div>

 <!-- bottom buttons -->
 <div class="abs mbtn" style="left:15px;top:492px"></div>
 <div class="abs mbtn" style="left:437px;top:492px"></div>
 <div class="abs mbtn" style="left:494px;top:492px"></div>
 <svg class="abs" style="left:21px;top:498px" width="32" height="32" viewBox="0 0 32 32"><circle cx="15.2" cy="14.7" r="15.2" fill="#1e80bb"/>
  <g stroke="#fff" fill="none" stroke-linecap="round"><path d="M4.5 6 L13.5 13" stroke-width="1.8"/><path d="M4.5 6 C4 9 4.5 11 6 12.5" stroke-width="2.2"/><path d="M6 12.5 L12.5 15" stroke-width="1.3"/><path d="M5.5 13.5 C5.5 16 7.5 18.5 10.5 19" stroke-width="2"/></g>
  <path d="M13.3 10.5 C13 5 17 3.5 20 5.3 L26 7.3 L20 7.7 C17.5 6.8 15.5 7 15.2 10.5Z" fill="#fff"/>
  <path d="M17.3 11.5 L19.3 11.5 C20.5 15.5 22 19.5 19 22.5 C17.5 24 14.5 24.8 13 24.8 L11.8 27.5 L11.3 23 C13.5 22.5 16 22 17.3 20 C18.5 18 18 15 17.3 11.5Z" fill="#fff"/></svg>
 <svg class="abs" style="left:443px;top:498px" width="32" height="32" viewBox="0 0 32 32">
  <g fill="#00897b"><circle cx="15" cy="15.5" r="10.2"/><circle cx="15.00" cy="4.90" r="3.6"/><circle cx="24.18" cy="10.20" r="3.6"/><circle cx="24.18" cy="20.80" r="3.6"/><circle cx="5.82" cy="20.80" r="3.6"/><circle cx="5.82" cy="10.20" r="3.6"/></g>
  <circle cx="15" cy="16" r="7.2" fill="#fff"/>
  <path d="M12.8 3 H17.2 V13 L15 15.5 L12.8 13Z" fill="#00897b"/>
  <rect x="11.8" y="19" width="6.4" height="9.5" rx="3" fill="#fff"/>
  <rect x="14.3" y="21.5" width="1.4" height="4.5" fill="#bbb"/></svg>
 <svg class="abs" style="left:500px;top:498px" width="32" height="32" viewBox="0 0 32 32"><circle cx="15.6" cy="14.3" r="14.6" fill="#ef4136"/>
  <path d="M10.3 8 A8.6 8.6 0 1 0 20.9 8" stroke="#fff" stroke-width="3.6" fill="none" stroke-linecap="round"/><line x1="15.6" y1="4" x2="15.6" y2="12.5" stroke="#fff" stroke-width="3" stroke-linecap="round"/></svg>
</div>

<svg class="abs" style="left:985px;top:684px" width="30" height="30" viewBox="985 684 30 30"><path d="M992 690 L1006 703.5 L999 704 L992 711Z" fill="#f2f2f2"/><path d="M993.3 692 L1004.3 702.8 L998.4 703 L993.3 708Z" fill="#000"/></svg>
</body></html>
